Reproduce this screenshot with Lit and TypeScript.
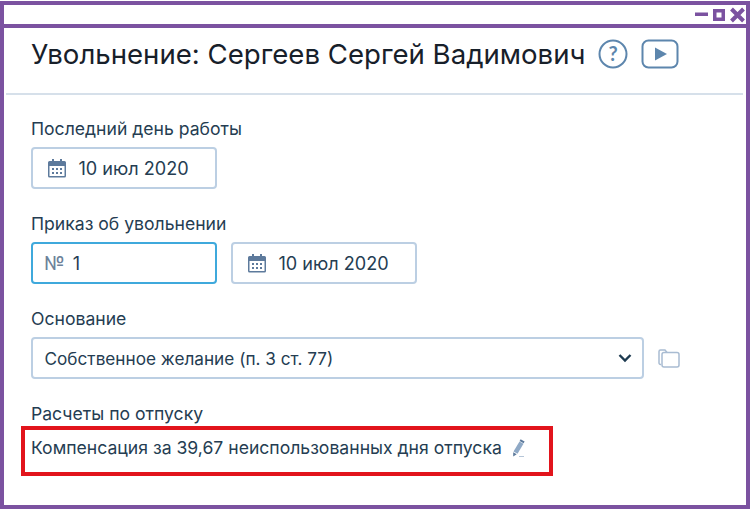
import { LitElement, html, css, svg } from "lit";
import { customElement } from "lit/decorators.js";

const calendar = svg`<svg class="cal" width="20" height="20" viewBox="0 0 20 20"><path fill="#5d7a9c" d="M5 1h2v2h6V1h2v2h2.500A1.500 1.500 0 0 1 19 4.500V18a1.500 1.500 0 0 1-1.500 1.500h-15A1.500 1.500 0 0 1 1 18V4.500A1.500 1.500 0 0 1 2.500 3H5z"/><rect x="2.500" y="8" width="15" height="10" fill="#fff"/><g fill="#5d7a9c"><rect x="5" y="10" width="2" height="2"/><rect x="9" y="10" width="2" height="2"/><rect x="13" y="10" width="2" height="2"/><rect x="5" y="14" width="2" height="2"/><rect x="9" y="14" width="2" height="2"/><rect x="13" y="14" width="2" height="2"/></g></svg>`;

@customElement("app-root")
export class AppRoot extends LitElement {
  static styles = css`
    :host { display: block; width: 750px; height: 510px; background: #fff; padding: 1px 0 1px 0; box-sizing: border-box; font-family: Inter, "Noto Sans", sans-serif; color: #1f3347; }
    .frame { height: 100%; box-sizing: border-box; border: 4px solid #7b52a0; display: flex; flex-direction: column; }
    .titlebar { height: 23px; flex: none; box-sizing: border-box; border-bottom: 4px solid #7b52a0; display: flex; justify-content: flex-end; align-items: center; }
    .titlebar svg { display: block; }
    .main { flex: 1; padding: 0 3px 0 2px; }
    .head { height: 67px; box-sizing: border-box; padding-left: 25px; border-bottom: 2px solid #d6e0ea; display: flex; align-items: center; gap: 13px; padding-bottom: 13px; }
    h1 { margin: 0; font-size: 27.600px; font-weight: 400; color: #17202a; line-height: 34px; white-space: nowrap; }
    .head svg { display: block; flex: none; }
    .form { padding: 23px 0 0 25px; display: flex; flex-direction: column; }
    .label { font-size: 17.600px; line-height: 22px; height: 22px; color: #253d52; margin-bottom: 7px; white-space: nowrap; }
    .label.tight { margin-bottom: 3px; }
    .row { display: flex; align-items: center; gap: 14px; margin-bottom: 24px; }
    .input { width: 186px; height: 42px; box-sizing: border-box; border: 2px solid #bccfe3; border-radius: 4px; display: flex; align-items: center; gap: 12px; padding-left: 13.500px; font-size: 18.100px; color: #253d52; flex: none; white-space: nowrap; }
    .input .cal { flex: none; }
    .focus { border: 2px solid #3fa9dc; padding-left: 11px; gap: 8px; }
    .no { color: #6d829a; font-size: 19px; }
    .select { width: 613px; height: 42px; box-sizing: border-box; border: 2px solid #bccfe3; border-radius: 4px; display: flex; align-items: center; justify-content: space-between; padding: 0 10.500px 0 11.500px; font-size: 17.200px; color: #253d52; flex: none; }
    .box { margin: -2px 0 0 -10px; width: 532px; height: 50px; box-sizing: border-box; border: 4px solid #e2141c; padding: 6px 0 0 6px; display: flex; gap: 10px; font-size: 17.600px; line-height: 24px; color: #253d52; white-space: nowrap; }
    .box svg { margin-top: 2px; flex: none; }
  `;

  render() {
    return html`<div class="frame">
      <div class="titlebar">
        <svg width="51" height="17" viewBox="0 0 51 17">
          <rect x="0" y="6.500" width="13" height="3.500" fill="#7b52a0"/>
          <rect x="19.750" y="4.750" width="8.500" height="8.500" fill="none" stroke="#7b52a0" stroke-width="3.500"/>
          <path d="M36.500 3l12 12M48.500 3l-12 12" fill="none" stroke="#7b52a0" stroke-width="4"/>
        </svg>
      </div>
      <div class="main">
        <div class="head">
          <h1>Увольнение: Сергеев Сергей Вадимович</h1>
          <svg width="30" height="30" viewBox="0 0 30 30">
            <circle cx="15" cy="15" r="13.500" fill="none" stroke="#5d86ad" stroke-width="2"/>
            <text x="15" y="22" text-anchor="middle" font-family="Lato, sans-serif" font-weight="700" font-size="20" fill="#5d86ad">?</text>
          </svg>
          <svg width="38" height="30" viewBox="0 0 38 30">
            <rect x="1.500" y="1.500" width="35" height="27" rx="6" fill="none" stroke="#5d86ad" stroke-width="2"/>
            <path d="M14 8.500l12 6.500-12 6.500z" fill="#5d86ad"/>
          </svg>
        </div>
        <div class="form">
          <div class="label">Последний день работы</div>
          <div class="row"><div class="input">${calendar}10 июл 2020</div></div>
          <div class="label">Приказ об увольнении</div>
          <div class="row">
            <div class="input focus"><span class="no">№</span>1</div>
            <div class="input">${calendar}10 июл 2020</div>
          </div>
          <div class="label">Основание</div>
          <div class="row">
            <div class="select">Собственное желание (п. 3 ст. 77)
              <svg width="14" height="10" viewBox="0 0 14 10"><path d="M1.500 2l5.500 5.500L12.500 2" fill="none" stroke="#1d3a50" stroke-width="2.400"/></svg>
            </div>
            <svg width="22" height="19" viewBox="0 0 22 19" fill="none" stroke="#a9bcd2" stroke-width="1.500">
              <path d="M3 15.500H2.500A1.500 1.500 0 0 1 1 14V2.500A1.500 1.500 0 0 1 2.500 1h4.500l2 2.500"/>
              <rect x="4" y="3.500" width="17" height="14.500" rx="2"/>
            </svg>
          </div>
          <div class="label tight">Расчеты по отпуску</div>
          <div class="box">Компенсация за 39,67 неиспользованных дня отпуска
            <svg width="14" height="20" viewBox="0 0 14 20">
              <path d="M7.500 3.500l4 2.300-6 10-4-2.300z" fill="#8fa9c6"/>
              <path d="M8.600 1.200l4 2.300-1 1.700-4-2.300z" fill="#5d7a9c"/>
              <path d="M1.200 14.300l3.500 2-3.500 2.200z" fill="#5d7a9c"/>
              <path d="M7 18.500h5" stroke="#b6c6d8" stroke-width="1"/>
            </svg>
          </div>
        </div>
      </div>
    </div>`;
  }
}
